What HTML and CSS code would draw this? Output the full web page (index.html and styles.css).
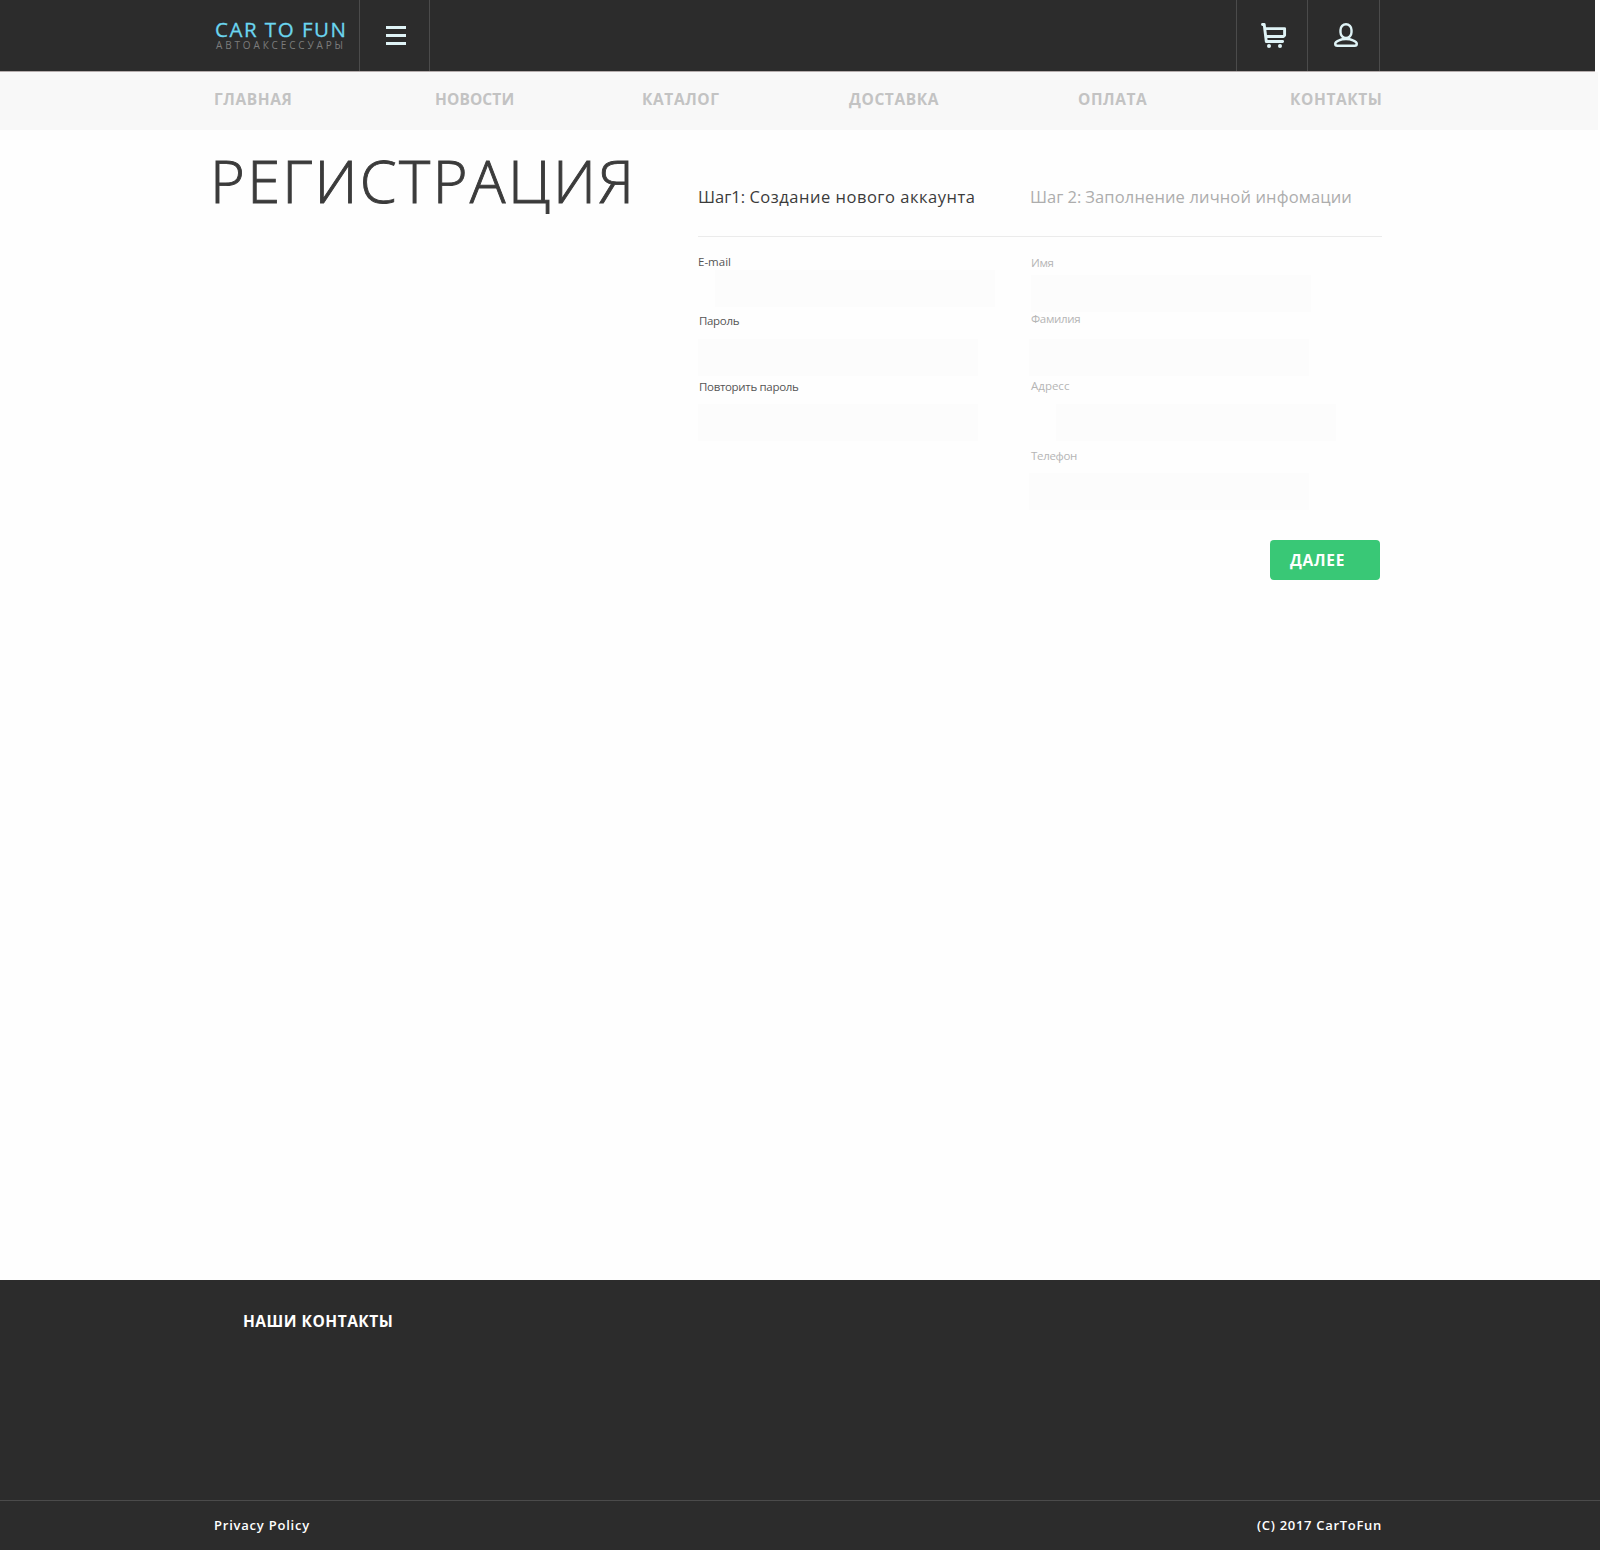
FILE: index.html
```html
<!DOCTYPE html>
<html lang="ru">
<head>
<meta charset="utf-8">
<title>Car To Fun — Регистрация</title>
<link rel="stylesheet" href="styles.css">
</head>
<body>
<header class="header">
  <a class="logo"><span class="logo-name">CAR TO FUN</span><span class="logo-sub">АВТОАКСЕССУАРЫ</span></a>
  <a class="tile tile-menu"><svg width="20" height="20" viewBox="0 0 20 20" fill="#dff3f6"><path d="M0 0h20v3H0zM0 8h20v3H0zM0 16h20v3H0z"/></svg></a>
  <div class="tiles-right">
    <a class="tile tile-cart"><svg width="28" height="28" viewBox="0 0 28 28" fill="none" stroke="#dff3f6" stroke-width="2.9" stroke-linejoin="round" stroke-linecap="round"><path d="M2.500 3.500H4.200L6.300 20.500H22.600M5.500 7.600H24.600V14.200L23.400 15.500H6.500"/><g fill="#dff3f6" stroke="none"><circle cx="9" cy="25" r="2"/><circle cx="20" cy="25" r="2"/></g></svg></a>
    <a class="tile tile-user"><svg width="26" height="26" viewBox="0 0 26 26" fill="none" stroke="#dff3f6" stroke-width="2.400" stroke-linejoin="round"><rect x="7.500" y="2.200" width="11" height="13.800" rx="5.500" ry="5.800"/><path d="M13 17C10.500 17 8.500 17.200 6 18.300C3.500 19.300 2.200 20.200 2.200 21.700C2.200 23 3 23.700 4.300 23.700H21.700C23 23.700 23.800 23 23.800 21.700C23.800 20.200 22.500 19.300 20 18.300C17.500 17.200 15.500 17 13 17Z"/></svg></a>
  </div>
</header>
<nav class="nav">
  <a>ГЛАВНАЯ</a><a class="nav-news">НОВОСТИ</a><a>КАТАЛОГ</a><a>ДОСТАВКА</a><a>ОПЛАТА</a><a>КОНТАКТЫ</a>
</nav>
<main class="main">
  <h1 class="title">РЕГИСТРАЦИЯ</h1>
  <form class="form">
    <div class="steps">
      <h2 class="step"><span class="step-number">Шаг1:</span> Создание нового аккаунта</h2>
      <h2 class="step step-next"><span class="step-number">Шаг 2:</span> Заполнение личной инфомации</h2>
    </div>
    <div class="columns">
      <div class="column">
        <label class="label label-email" for="email">E-mail</label>
        <input class="field field-email" id="email">
        <label class="label label-password" for="password">Пароль</label>
        <input class="field field-password" id="password" type="password">
        <label class="label label-repeat" for="repeat">Повторить пароль</label>
        <input class="field field-repeat" id="repeat" type="password">
      </div>
      <div class="column column-next">
        <label class="label label-name" for="name">Имя</label>
        <input class="field field-name" id="name">
        <label class="label label-surname" for="surname">Фамилия</label>
        <input class="field field-surname" id="surname">
        <label class="label label-address" for="address">Адресс</label>
        <input class="field field-address" id="address">
        <label class="label label-phone" for="phone">Телефон</label>
        <input class="field field-phone" id="phone">
      </div>
    </div>
    <button class="next" type="button">ДАЛЕЕ</button>
  </form>
</main>
<footer class="footer">
  <h3 class="footer-title">НАШИ КОНТАКТЫ</h3>
  <div class="footer-bar"><a>Privacy Policy</a><span class="copyright">(C) 2017 CarToFun</span></div>
</footer>
</body>
</html>
```
FILE: styles.css
```css
* { box-sizing: border-box; }
body {
  margin: 0;
  min-height: 1550px;
  display: flex;
  flex-direction: column;
  background: #fefefe;
  color: #3b3b3b;
  font-family: "Open Sans", "Noto Sans", sans-serif;
}
h1, h2, h3 { margin: 0; font-weight: 400; }

.header {
  display: flex;
  width: 1595px;
  height: 72px;
  padding-left: 214px;
  background: #2c2c2c;
  border-bottom: 1px solid #b5adad;
}
.logo { display: flex; flex-direction: column; width: 145px; padding: 17px 0 0 1px; white-space: nowrap; }
.logo-name {
  font-size: 20.5px;
  line-height: 25px;
  letter-spacing: 1.5px;
  color: #6bd6f0;
  -webkit-text-stroke: 0.3px #6bd6f0;
}
.logo-sub { margin-left: 1px; font-size: 10px; line-height: 7px; letter-spacing: 2.85px; color: #7c7c7c; }
.tile { display: flex; border-left: 1px solid #4b4b4b; }
.tile-menu { width: 71px; padding: 26px 0 0 26px; border-right: 1px solid #4b4b4b; }
.tiles-right { display: flex; margin-left: 806px; border-right: 1px solid #4b4b4b; }
.tile-cart { width: 71px; padding: 21px 0 0 23px; }
.tile-user { width: 72px; padding: 22px 0 0 25px; }

.nav {
  display: grid;
  grid-template-columns: 221px 207px 207px 229px 212px 120px;
  width: 1598px;
  height: 58px;
  padding: 16px 0 0 214px;
  background: #f8f8f8;
  color: #c3c3c3;
  font-size: 15.5px;
  font-weight: 700;
  line-height: 22px;
  letter-spacing: 0.6px;
}
.nav-news { letter-spacing: 0.1px; }

.main { display: flex; height: 1150px; padding-left: 210px; }
.title {
  width: 488px;
  padding-top: 10px;
  font-size: 59.5px;
  font-weight: 300;
  line-height: 80px;
  letter-spacing: 2.35px;
  white-space: nowrap;
  -webkit-text-stroke: 0.9px #3b3b3b;
}
.form { display: flex; flex-direction: column; width: 684px; }
.steps { display: flex; height: 107px; padding-top: 55px; border-bottom: 1px solid #ebebeb; white-space: nowrap; }
.step { width: 332px; font-size: 16.5px; line-height: 24px; letter-spacing: 0.52px; }
.step-next { color: #adadad; letter-spacing: 0.14px; }
.step-number { margin-right: -0.5px; letter-spacing: 0; }

.columns { display: flex; }
.column { display: flex; flex-direction: column; align-items: flex-start; width: 331px; }
.label { height: 16px; font-size: 11.5px; line-height: 16px; letter-spacing: -0.32px; color: #555; }
.column-next .label { margin-left: 2px; color: #b5b5b5; }
.field { width: 280px; height: 37px; padding: 0; border: 0; background: #fcfcfc; }
.label-email { margin-top: 17px; letter-spacing: 0; }
.field-email { margin-left: 17px; }
.label-password { margin: 6px 0 0 1px; }
.field-password { margin-top: 10px; }
.label-repeat { margin: 3px 0 0 1px; }
.field-repeat { margin-top: 9px; }
.label-name { margin-top: 18px; }
.field-name { margin: 4px 0 0 2px; }
.label-surname { margin-top: -1px; }
.field-surname { margin-top: 12px; }
.label-address { margin-top: 2px; letter-spacing: 0; }
.field-address { margin: 10px 0 0 27px; }
.label-phone { margin-top: 7px; }
.field-phone { margin-top: 9px; }
.next {
  align-self: flex-end;
  width: 110px;
  height: 40px;
  margin: 30px 2px 0 0;
  padding: 0 0 0 20px;
  border: 0;
  border-radius: 4px;
  background: #39c876;
  color: #fff;
  font: 700 15.5px/40px "Open Sans", sans-serif;
  letter-spacing: 0.75px;
  text-align: left;
}

.footer { height: 270px; background: #2c2c2c; color: #fff; }
.footer-title {
  height: 220px;
  padding: 30px 0 0 243px;
  font-size: 15.5px;
  font-weight: 700;
  line-height: 22px;
  letter-spacing: 0.5px;
}
.footer-bar {
  display: flex;
  justify-content: space-between;
  height: 50px;
  padding: 14px 218px 0 214px;
  border-top: 1px solid #4b4b4b;
  font-size: 13px;
  font-weight: 600;
  line-height: 20px;
  letter-spacing: 0.77px;
}
.copyright { letter-spacing: 0.7px; }
```
